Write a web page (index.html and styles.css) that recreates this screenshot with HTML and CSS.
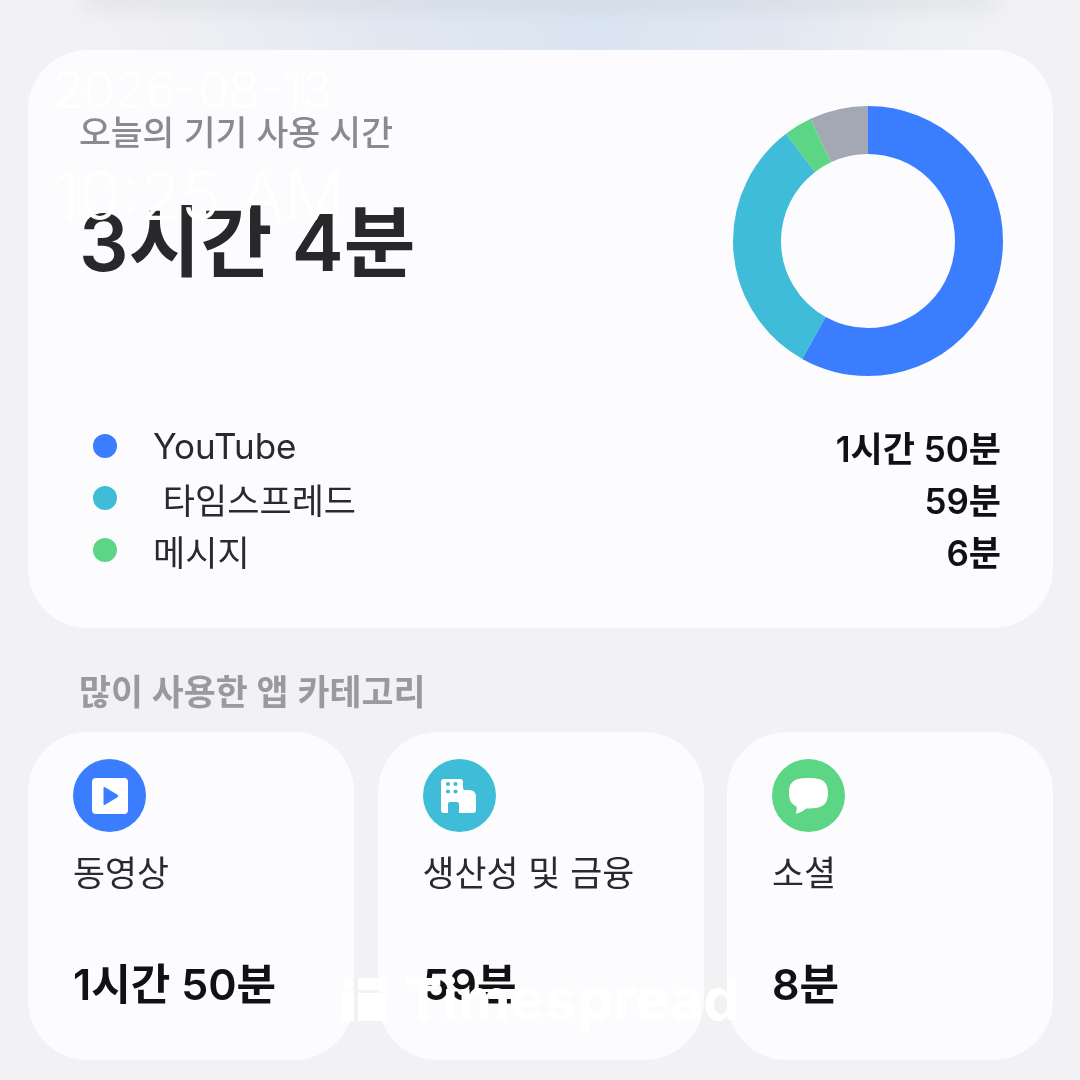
FILE: index.html
```html
<!DOCTYPE html>
<html lang="ko">
<head>
    <meta charset="UTF-8">
    <meta name="viewport" content="width=device-width, initial-scale=1.0">
    <title>Timespread</title>
    <link rel="stylesheet" href="styles.css">
</head>
<body>
    <div class="top-band"><div class="top-sheet"></div></div>
    <div class="page">
        <section class="usage-card">
            <div class="usage-head">
                <div class="usage-total">
                    <p class="usage-label">오늘의 기기 사용 시간</p>
                    <p class="usage-time">3시간 4분</p>
                </div>
                <svg class="donut" viewBox="0 0 270 270">
                    <circle class="seg seg-gray" cx="135" cy="135" r="111" pathLength="100"></circle>
                    <circle class="seg seg-green" cx="135" cy="135" r="111" pathLength="100"></circle>
                    <circle class="seg seg-teal" cx="135" cy="135" r="111" pathLength="100"></circle>
                    <circle class="seg seg-blue" cx="135" cy="135" r="111" pathLength="100"></circle>
                </svg>
            </div>
            <ul class="legend">
                <li class="legend-row">
                    <span class="dot dot-blue"></span>
                    <span class="legend-name">YouTube</span>
                    <span class="legend-value">1시간 50분</span>
                </li>
                <li class="legend-row">
                    <span class="dot dot-teal"></span>
                    <span class="legend-name">&nbsp;타임스프레드</span>
                    <span class="legend-value">59분</span>
                </li>
                <li class="legend-row">
                    <span class="dot dot-green"></span>
                    <span class="legend-name">메시지</span>
                    <span class="legend-value">6분</span>
                </li>
            </ul>
        </section>

        <h2 class="section-title">많이 사용한 앱 카테고리</h2>

        <div class="categories">
            <div class="category">
                <span class="cat-icon dot-blue">
                    <svg viewBox="0 0 36 36" width="36" height="36">
                        <rect x="0" y="0" width="36" height="36" rx="4" fill="#fff"></rect>
                        <path d="M11.500 10 Q11.500 8.500 13 9.300 L25.500 16.700 Q27 18 25.500 19.300 L13 26.700 Q11.500 27.500 11.500 26 Z" fill="#3b7dff"></path>
                    </svg>
                </span>
                <p class="cat-name">동영상</p>
                <p class="cat-time">1시간 50분</p>
            </div>
            <div class="category">
                <span class="cat-icon dot-teal">
                    <svg viewBox="0 0 36 34" width="36" height="34">
                        <path fill="#fff" d="M0 3 Q0 0 3 0 H19 Q22 0 22 3 V9 Q22 11 24 11 H28 Q35 11 35 18 V31 Q35 34 32 34 H18 V25 Q18 23 16 23 H9 Q7 23 7 25 V34 H3 Q0 34 0 31 Z"></path>
                        <g fill="#3fbdd8">
                            <circle cx="7" cy="5" r="2.100"></circle>
                            <circle cx="14.500" cy="5" r="2.100"></circle>
                            <circle cx="7" cy="12.500" r="2.100"></circle>
                            <circle cx="14.500" cy="12.500" r="2.100"></circle>
                        </g>
                    </svg>
                </span>
                <p class="cat-name">생산성 및 금융</p>
                <p class="cat-time">59분</p>
            </div>
            <div class="category">
                <span class="cat-icon dot-green">
                    <svg viewBox="0 0 39 36" width="39" height="36">
                        <path fill="#fff" d="M19.500 0 C33 0 39 3 39 15 C39 27 33 30.500 19.500 30.500 H17 C14.500 33 11 35 7.500 35.500 C6.800 35.600 6.400 35 6.800 34.400 C7.800 33 8 31 7.500 28.500 C2 26 0 22 0 15 C0 3 6 0 19.500 0 Z"></path>
                    </svg>
                </span>
                <p class="cat-name">소셜</p>
                <p class="cat-time">8분</p>
            </div>
        </div>
    </div>

    <!-- burned-in stamp over the screenshot -->
    <div class="stamp">
        <span class="stamp-date">2026-08-13</span>
        <span class="stamp-clock">10:25 AM</span>
    </div>
    <div class="brand">
        <svg class="brand-mark" viewBox="0 0 45 43" width="45" height="43">
            <circle cx="6" cy="6" r="6" fill="#fff"></circle>
            <rect x="0" y="15" width="12" height="28" fill="#fff"></rect>
            <rect x="16" y="0" width="29" height="12" fill="#fff"></rect>
            <rect x="16" y="15" width="29" height="28" fill="#fff"></rect>
        </svg>
        <span class="brand-name">Timespread</span>
    </div>
</body>
</html>
```

FILE: styles.css
```css
* {
    box-sizing: border-box;
}
body {
    margin: 0;
    height: 1080px;
    overflow: hidden;
    background-color: #f2f2f4;
    color: #1c1c1e;
    font-family: Inter, "Noto Sans CJK KR", sans-serif;
}
p, h2, ul {
    margin: 0;
    padding: 0;
}
ul {
    list-style: none;
}

.top-band {
    height: 50px;
    overflow: hidden;
    background: linear-gradient(90deg, #f2f2f4 8%, #ecedf2 22%, #e2e8f2 35%, #dae5f1 55%, #e2e8f2 72%, #eef0f2 86%, #f2f2f4 94%);
}
.top-sheet {
    height: 0;
    margin: 0 90px;
    box-shadow: 0 0 20px 7px rgba(165, 170, 180, 0.24);
}
/* the source image is an upscaled capture, everything in it is a little soft */
.page {
    padding: 0 27px 0 28px;
    filter: blur(0.5px);
}

.usage-card {
    height: 578px;
    padding: 56px 50px 0 51px;
    border-radius: 60px;
    background-color: #fcfcfe;
}
.usage-head {
    display: flex;
    justify-content: space-between;
    align-items: flex-start;
}
.usage-label {
    margin-top: 1px;
    font-size: 34.6px;
    line-height: 50px;
    font-weight: 500;
    color: #8b8b8f;
}
.usage-time {
    margin-top: 36px;
    font-size: 78px;
    line-height: 100px;
    font-weight: 600;
    color: #28282b;
}
.donut {
    display: block;
    width: 270px;
    height: 270px;
    transform: rotate(-90deg);
}
.seg {
    fill: none;
    stroke-width: 48;
}
.seg-blue {
    stroke: #3b7dff;
    stroke-dasharray: 58.1 41.9;
}
.seg-teal {
    stroke: #3fbdd8;
    stroke-dasharray: 0 58.1 31.5 10.4;
}
.seg-green {
    stroke: #5cd685;
    stroke-dasharray: 0 89.6 3.4 7;
}
.seg-gray {
    stroke: #a3a8b4;
    stroke-dasharray: 0 93 7 0;
}

.legend {
    margin-top: 44px;
    padding-left: 14px;
    padding-right: 2px;
}
.legend-row {
    display: flex;
    align-items: center;
    height: 52px;
}
.dot {
    width: 24px;
    height: 24px;
    border-radius: 50%;
}
.dot-blue {
    background-color: #3b7dff;
}
.dot-teal {
    background-color: #3fbdd8;
}
.dot-green {
    background-color: #5cd685;
}
.legend-name {
    margin-left: 36px;
    font-size: 35px;
    color: #2a2a2d;
}
.legend-value {
    margin-left: auto;
    font-size: 35px;
    font-weight: 600;
    color: #111113;
}

.section-title {
    margin: 38px 0 0 51px;
    font-size: 34.8px;
    line-height: 52px;
    font-weight: 600;
    color: #9a9a9e;
}

.categories {
    display: grid;
    grid-template-columns: 326px 326px 326px;
    column-gap: 23.5px;
    margin-top: 14px;
}
.category {
    height: 328px;
    padding: 27px 0 0 45px;
    border-radius: 60px;
    background-color: #fcfcfe;
}
.cat-icon {
    display: flex;
    align-items: center;
    justify-content: center;
    width: 73px;
    height: 73px;
    border-radius: 50%;
}
.cat-name {
    margin-top: 17px;
    font-size: 34.8px;
    line-height: 48px;
    color: #2a2a2d;
}
.cat-time {
    margin-top: 60px;
    font-size: 43px;
    line-height: 54px;
    font-weight: 600;
    color: #111113;
}

.stamp {
    position: absolute;
    left: 53px;
    top: 60px;
    display: flex;
    flex-direction: column;
    color: #fff;
}
.stamp-date {
    font-size: 50px;
    line-height: 60px;
    font-weight: 300;
}
.stamp-clock {
    margin-top: 36px;
    font-size: 67px;
    line-height: 80px;
    font-weight: 300;
}
.brand {
    position: absolute;
    left: 342px;
    top: 967px;
    display: flex;
    align-items: center;
    gap: 17px;
    height: 64px;
    color: #fff;
}
.brand-name {
    font-size: 57.5px;
    font-weight: 700;
}
```
